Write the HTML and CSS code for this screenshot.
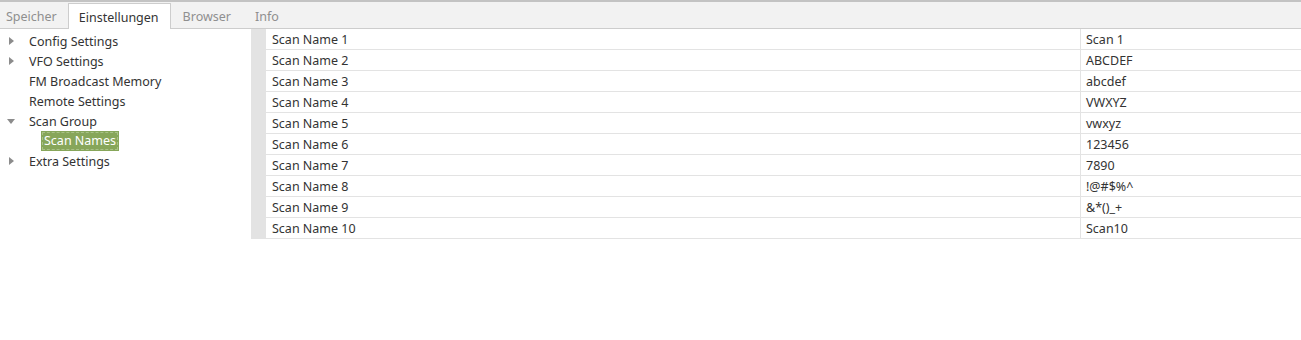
FILE: index.html
```html
<!DOCTYPE html>
<html lang="de">
<head>
    <meta charset="UTF-8">
    <title>Einstellungen</title>
    <link rel="stylesheet" href="styles.css">
</head>
<body>
    <div class="tabbar">
        <div class="tab first">Speicher</div>
        <div class="tab active">Einstellungen</div>
        <div class="tab">Browser</div>
        <div class="tab">Info</div>
    </div>

    <div class="main">
        <ul class="tree">
            <li class="node"><span class="arrow closed"></span>Config Settings</li>
            <li class="node"><span class="arrow closed"></span>VFO Settings</li>
            <li class="node"><span class="arrow"></span>FM Broadcast Memory</li>
            <li class="node"><span class="arrow"></span>Remote Settings</li>
            <li class="node"><span class="arrow open"></span>Scan Group</li>
            <li class="node child"><span class="selected">Scan Names</span></li>
            <li class="node"><span class="arrow closed"></span>Extra Settings</li>
        </ul>

        <div class="grid">
            <div class="row"><span class="head"></span><span class="name">Scan Name 1</span><span class="value">Scan 1</span></div>
            <div class="row"><span class="head"></span><span class="name">Scan Name 2</span><span class="value">ABCDEF</span></div>
            <div class="row"><span class="head"></span><span class="name">Scan Name 3</span><span class="value">abcdef</span></div>
            <div class="row"><span class="head"></span><span class="name">Scan Name 4</span><span class="value">VWXYZ</span></div>
            <div class="row"><span class="head"></span><span class="name">Scan Name 5</span><span class="value">vwxyz</span></div>
            <div class="row"><span class="head"></span><span class="name">Scan Name 6</span><span class="value">123456</span></div>
            <div class="row"><span class="head"></span><span class="name">Scan Name 7</span><span class="value">7890</span></div>
            <div class="row"><span class="head"></span><span class="name">Scan Name 8</span><span class="value">!@#$%^</span></div>
            <div class="row"><span class="head"></span><span class="name">Scan Name 9</span><span class="value">&amp;*()_+</span></div>
            <div class="row"><span class="head"></span><span class="name">Scan Name 10</span><span class="value">Scan10</span></div>
        </div>
    </div>
</body>
</html>
```

FILE: styles.css
```css
body {
    margin: 0;
    font-family: "Noto Sans", "Open Sans", sans-serif;
    font-size: 12.5px;
    color: #3c3c3c;
    background: #fff;
    width: 1301px;
    height: 340px;
    overflow: hidden;
}

/* Tab-Leiste */
.tabbar {
    display: flex;
    align-items: flex-end;
    height: 29px;
    box-sizing: border-box;
    background: #f2f2f2;
    border-top: 2px solid #c3c3c3;
    border-bottom: 1px solid #cdcdcd;
}

.tab {
    padding: 3px 12px 0 12px;
    height: 26px;
    line-height: 23px;
    box-sizing: border-box;
    color: #8f8f8f;
}

.tab.first {
    padding-left: 6px;
    padding-right: 10px;
}

.tab.active {
    background: #fff;
    color: #333;
    border: 1px solid #cdcdcd;
    border-bottom: none;
    height: 26px;
    padding: 2px 11px 0 10px;
    line-height: 23px;
    margin-left: 1px;
    position: relative;
    top: 1px;
}

.main {
    display: flex;
}

/* Baum links */
.tree {
    list-style: none;
    margin: 0;
    padding: 2px 0 0 0;
    width: 251px;
    flex-shrink: 0;
}

.node {
    display: flex;
    align-items: center;
    height: 20px;
    color: #333;
}

.arrow {
    width: 29px;
    flex-shrink: 0;
    position: relative;
    height: 20px;
}

.arrow.closed::before {
    content: "";
    position: absolute;
    left: 9px;
    top: 6px;
    border-left: 5px solid #8c8c8c;
    border-top: 4px solid transparent;
    border-bottom: 4px solid transparent;
}

.arrow.open::before {
    content: "";
    position: absolute;
    left: 7px;
    top: 8px;
    border-top: 5px solid #8c8c8c;
    border-left: 4.5px solid transparent;
    border-right: 4.5px solid transparent;
}

.node.child {
    padding-left: 41px;
}

.selected {
    background: #87a65a;
    color: #fff;
    outline: 1px dashed #a9c287;
    outline-offset: -2px;
    padding: 0 3px;
    height: 20px;
    line-height: 20px;
}

/* Tabelle rechts */
.grid {
    flex: 1;
}

.row {
    display: flex;
    height: 21px;
    line-height: 21px;
    box-sizing: border-box;
}

.head {
    width: 15px;
    background: #e3e3e3;
    flex-shrink: 0;
}

.name {
    width: 808px;
    padding-left: 6px;
    border-bottom: 1px solid #e3e3e3;
    border-right: 1px solid #e3e3e3;
    flex-shrink: 0;
    color: #333;
}

.value {
    flex: 1;
    padding-left: 5px;
    border-bottom: 1px solid #e3e3e3;
    color: #333;
}
```
